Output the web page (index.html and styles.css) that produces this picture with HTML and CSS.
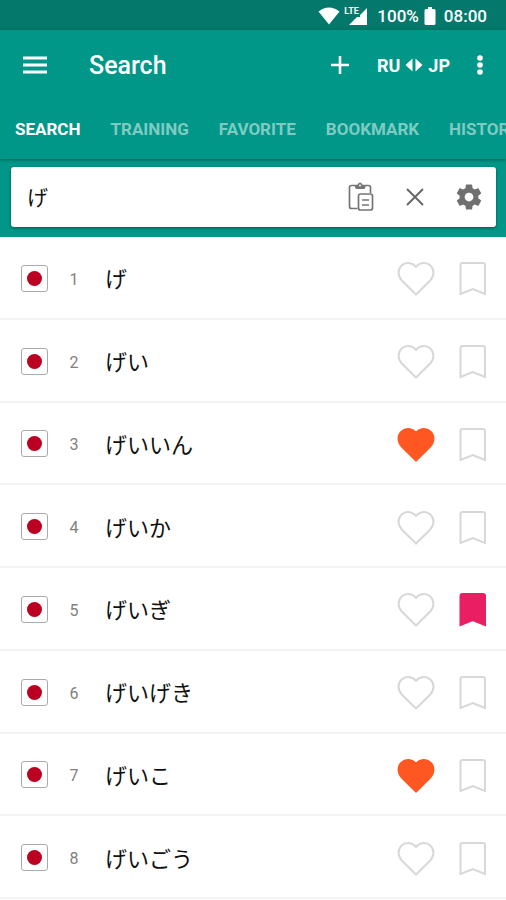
FILE: index.html
```html
<!DOCTYPE html>
<html lang="en">
<head>
<meta charset="utf-8">
<meta name="viewport" content="width=device-width, initial-scale=1">
<title>Search</title>
<link rel="stylesheet" href="styles.css">
</head>
<body>
<svg class="sprite" aria-hidden="true">
  <symbol id="heart" viewBox="0 0 40 36"><path d="M20 34.500 L5.800 20.500 C1.500 16 1.600 9.400 5.400 5.700 C9.400 1.900 16 2.100 20 6.900 C24 2.100 30.600 1.900 34.600 5.700 C38.400 9.400 38.500 16 34.200 20.500 Z"/></symbol>
  <symbol id="bookmark" viewBox="0 0 28 36"><path d="M1.500 34 V5 Q1.500 3 3.500 3 H24 Q26 3 26 5 V34 L13.700 29 Z"/></symbol>
</svg>
<div class="status">
  <svg class="wifi" viewBox="0 0 22 18" aria-hidden="true"><path d="M0.500 4.500 Q11 -3.500 21.500 4.500 L11 17.500 Z"/></svg>
  <div class="signal">
    <svg viewBox="0 0 24 20" aria-hidden="true"><path d="M23 2 V19 H5 L13 11 H16 V9 Z"/></svg>
    <span class="lte">LTE</span>
  </div>
  <span class="percent">100%</span>
  <svg class="battery" viewBox="0 0 12 20" aria-hidden="true"><path d="M4 1 H8 V3 H10 Q11.500 3 11.500 4.500 V17.500 Q11.500 19 10 19 H2 Q0.500 19 0.500 17.500 V4.500 Q0.500 3 2 3 H4 Z"/></svg>
  <span class="time">08:00</span>
</div>
<header class="top">
  <div class="appbar">
    <button class="menu" aria-label="Menu"><svg width="24" height="18" viewBox="0 0 24 18"><path d="M0 0.500 H24 V3.500 H0 Z M0 7.500 H24 V10.500 H0 Z M0 14.500 H24 V17.500 H0 Z"/></svg></button>
    <h1>Search</h1>
    <button class="add" aria-label="Add"><svg width="18" height="18" viewBox="0 0 18 18"><path d="M7.700 0 H10.300 V7.700 H18 V10.300 H10.300 V18 H7.700 V10.300 H0 V7.700 H7.700 Z"/></svg></button>
    <button class="lang"><span>RU</span><svg width="18" height="14" viewBox="0 0 18 14" aria-hidden="true"><path d="M7.500 0.500 V13.500 L0.500 7 Z M10.500 0.500 V13.500 L17.500 7 Z"/></svg><span>JP</span></button>
    <button class="more" aria-label="More options"><svg width="6" height="20" viewBox="0 0 6 20"><circle cx="3" cy="3" r="2.800"/><circle cx="3" cy="10" r="2.800"/><circle cx="3" cy="17" r="2.800"/></svg></button>
  </div>
  <nav class="tabs">
    <a href="#search" class="active">SEARCH</a>
    <a href="#training">TRAINING</a>
    <a href="#favorite">FAVORITE</a>
    <a href="#bookmark-tab">BOOKMARK</a>
    <a href="#history">HISTORY</a>
  </nav>
</header>
<div class="searcharea">
  <form class="searchbox">
    <input type="text" value="げ" aria-label="Search word">
    <button type="button" aria-label="Paste"><svg width="28" height="32" viewBox="0 0 28 32" fill="none" stroke="#757575" stroke-width="1.700"><path d="M10.500 27.500 H4.500 Q2.500 27.500 2.500 25.500 V6.500 Q2.500 4.500 4.500 4.500 H21.500 Q23.500 4.500 23.500 6.500 V12"/><path d="M8 4 H10.500 Q11 1.500 13 1.500 Q15 1.500 15.500 4 H18.500 V6 Q18.500 8 16.500 8 H10 Q8 8 8 6 Z" fill="#757575" stroke="none"/><circle cx="13" cy="4.500" r="1" fill="#fff" stroke="none"/><rect x="11.500" y="13" width="14" height="16" rx="2"/><path d="M15 19 H22 M15 24 H22"/></svg></button>
    <button type="button" aria-label="Clear"><svg width="18" height="18" viewBox="0 0 18 18" fill="none" stroke="#666" stroke-width="1.900"><path d="M1 1 L17 17 M17 1 L1 17"/></svg></button>
    <button type="button" aria-label="Settings"><svg width="30" height="30" viewBox="0 0 24 24" fill="#707070"><path d="M19.430 12.980c.04-.32.07-.64.07-.98s-.03-.66-.07-.98l2.110-1.650c.19-.15.24-.42.12-.64l-2-3.460c-.12-.22-.39-.3-.61-.22l-2.490 1c-.52-.4-1.080-.73-1.690-.98l-.38-2.650C14.460 2.180 14.250 2 14 2h-4c-.25 0-.46.18-.49.42l-.38 2.650c-.61.25-1.170.59-1.690.98l-2.490-1c-.23-.09-.49 0-.61.22l-2 3.460c-.13.22-.07.49.12.64l2.110 1.650c-.04.32-.07.65-.07.98s.03.66.07.98l-2.110 1.650c-.19.15-.24.42-.12.64l2 3.460c.12.22.39.3.61.22l2.490-1c.52.4 1.080.73 1.690.98l.38 2.650c.03.24.24.42.49.42h4c.25 0 .46-.18.49-.42l.38-2.650c.61-.25 1.170-.59 1.690-.98l2.490 1c.23.09.49 0 .61-.22l2-3.460c.12-.22.07-.49-.12-.64l-2.110-1.650zM12 15.500c-1.930 0-3.500-1.570-3.500-3.500s1.570-3.500 3.500-3.500 3.500 1.570 3.500 3.500-1.570 3.500-3.500 3.500z"/></svg></button>
  </form>
</div>
<ul class="results">
  <li><span class="flag"></span><span class="num">1</span><span class="word" lang="ja">げ</span><button aria-label="Favorite"><svg class="heart"><use href="#heart"/></svg></button><button aria-label="Bookmark"><svg class="mark"><use href="#bookmark"/></svg></button></li>
  <li><span class="flag"></span><span class="num">2</span><span class="word" lang="ja">げい</span><button aria-label="Favorite"><svg class="heart"><use href="#heart"/></svg></button><button aria-label="Bookmark"><svg class="mark"><use href="#bookmark"/></svg></button></li>
  <li><span class="flag"></span><span class="num">3</span><span class="word" lang="ja">げいいん</span><button aria-label="Favorite" aria-pressed="true"><svg class="heart on"><use href="#heart"/></svg></button><button aria-label="Bookmark"><svg class="mark"><use href="#bookmark"/></svg></button></li>
  <li><span class="flag"></span><span class="num">4</span><span class="word" lang="ja">げいか</span><button aria-label="Favorite"><svg class="heart"><use href="#heart"/></svg></button><button aria-label="Bookmark"><svg class="mark"><use href="#bookmark"/></svg></button></li>
  <li><span class="flag"></span><span class="num">5</span><span class="word" lang="ja">げいぎ</span><button aria-label="Favorite"><svg class="heart"><use href="#heart"/></svg></button><button aria-label="Bookmark" aria-pressed="true"><svg class="mark on"><use href="#bookmark"/></svg></button></li>
  <li><span class="flag"></span><span class="num">6</span><span class="word" lang="ja">げいげき</span><button aria-label="Favorite"><svg class="heart"><use href="#heart"/></svg></button><button aria-label="Bookmark"><svg class="mark"><use href="#bookmark"/></svg></button></li>
  <li><span class="flag"></span><span class="num">7</span><span class="word" lang="ja">げいこ</span><button aria-label="Favorite" aria-pressed="true"><svg class="heart on"><use href="#heart"/></svg></button><button aria-label="Bookmark"><svg class="mark"><use href="#bookmark"/></svg></button></li>
  <li><span class="flag"></span><span class="num">8</span><span class="word" lang="ja">げいごう</span><button aria-label="Favorite"><svg class="heart"><use href="#heart"/></svg></button><button aria-label="Bookmark"><svg class="mark"><use href="#bookmark"/></svg></button></li>
</ul>
</body>
</html>
```
FILE: styles.css
```css
* { box-sizing: border-box; }
body {
  margin: 0;
  min-height: 100vh;
  display: flex;
  flex-direction: column;
  background: #fff;
  font-family: Roboto, "Noto Sans CJK JP", sans-serif;
  overflow-x: hidden;
}
button {
  display: flex;
  align-items: center;
  justify-content: center;
  flex: none;
  margin: 0;
  padding: 0;
  border: 0;
  background: none;
  color: inherit;
  font: inherit;
  cursor: pointer;
}
.sprite { position: absolute; width: 0; height: 0; }

.status {
  display: flex;
  align-items: center;
  justify-content: flex-end;
  height: 30px;
  padding: 1px 19px 0 0;
  background: #04796b;
  color: #fff;
  fill: #fff;
  font-size: 17px;
  font-weight: 500;
}
.wifi { width: 22px; height: 18px; margin-right: 4px; }
.signal { position: relative; height: 20px; margin-right: 9px; }
.signal svg { display: block; width: 24px; height: 20px; }
.lte {
  position: absolute;
  left: 0;
  top: 0;
  font-size: 9px;
  line-height: 10px;
  font-weight: 700;
}
.battery { width: 12px; height: 20px; margin: 0 8px 0 5px; }

.top {
  position: relative;
  background: #009788;
  color: #fff;
  fill: #fff;
  box-shadow: 0 1px 3px rgba(0, 60, 50, .6);
}
.appbar { display: flex; align-items: center; height: 70px; }
.menu { width: 69px; height: 70px; }
h1 {
  flex: 1;
  margin: 0;
  padding: 2px 0 0 20px;
  font-size: 25px;
  line-height: 32px;
  font-weight: 500;
}
.add { width: 38px; height: 48px; }
.lang { gap: 5px; margin-left: 18px; font-size: 18px; font-weight: 700; }
.more { width: 36px; height: 48px; margin: 0 8px 0 12px; }
.tabs {
  display: flex;
  gap: 30px;
  height: 59px;
  padding: 0 15px;
  line-height: 58px;
  overflow: hidden;
  font-size: 17px;
  font-weight: 700;
}
.tabs a { color: #7fcbc3; text-decoration: none; }
.tabs .active { color: #fff; }

.searcharea { padding: 8px 10px 10px 11px; background: #009788; }
.searchbox {
  display: flex;
  height: 60px;
  border-radius: 3px;
  background: #fff;
  box-shadow: 0 1px 3px rgba(0, 40, 35, .6);
}
.searchbox input {
  flex: 1;
  min-width: 0;
  padding: 0 0 2px 16px;
  border: 0;
  outline: 0;
  background: none;
  color: #111;
  font: 400 21px "Noto Sans CJK JP", sans-serif;
}
.searchbox button { width: 54px; }

.results {
  flex: 1;
  display: grid;
  grid-auto-rows: minmax(80px, 1fr);
  margin: 0 0 1px;
  padding: 0;
  list-style: none;
}
.results li {
  display: flex;
  align-items: center;
  padding: 2px 5px 0 21px;
  border-bottom: 2px solid #f3f3f3;
}
.flag {
  display: flex;
  align-items: center;
  justify-content: center;
  width: 27px;
  height: 27px;
  border: 1px solid #aaa;
  border-radius: 3px;
}
.flag::before {
  content: "";
  width: 15px;
  height: 15px;
  border-radius: 50%;
  background: #bc0022;
}
.num { width: 52px; padding-top: 2px; text-align: center; color: #808080; font-size: 16px; }
.word {
  flex: 1;
  padding: 0 0 2px 5px;
  color: #111;
  font: 400 22px/30px "Noto Sans CJK JP", sans-serif;
}
.results button { width: 57px; height: 57px; }
.results svg { fill: none; stroke: #d8d8d8; stroke-width: 2; }
.heart { width: 40px; height: 36px; }
.mark { width: 28px; height: 36px; }
.results .heart.on { fill: #ff5722; stroke: #ff5722; }
.results .mark.on { fill: #e91e63; stroke: #e91e63; }
```
